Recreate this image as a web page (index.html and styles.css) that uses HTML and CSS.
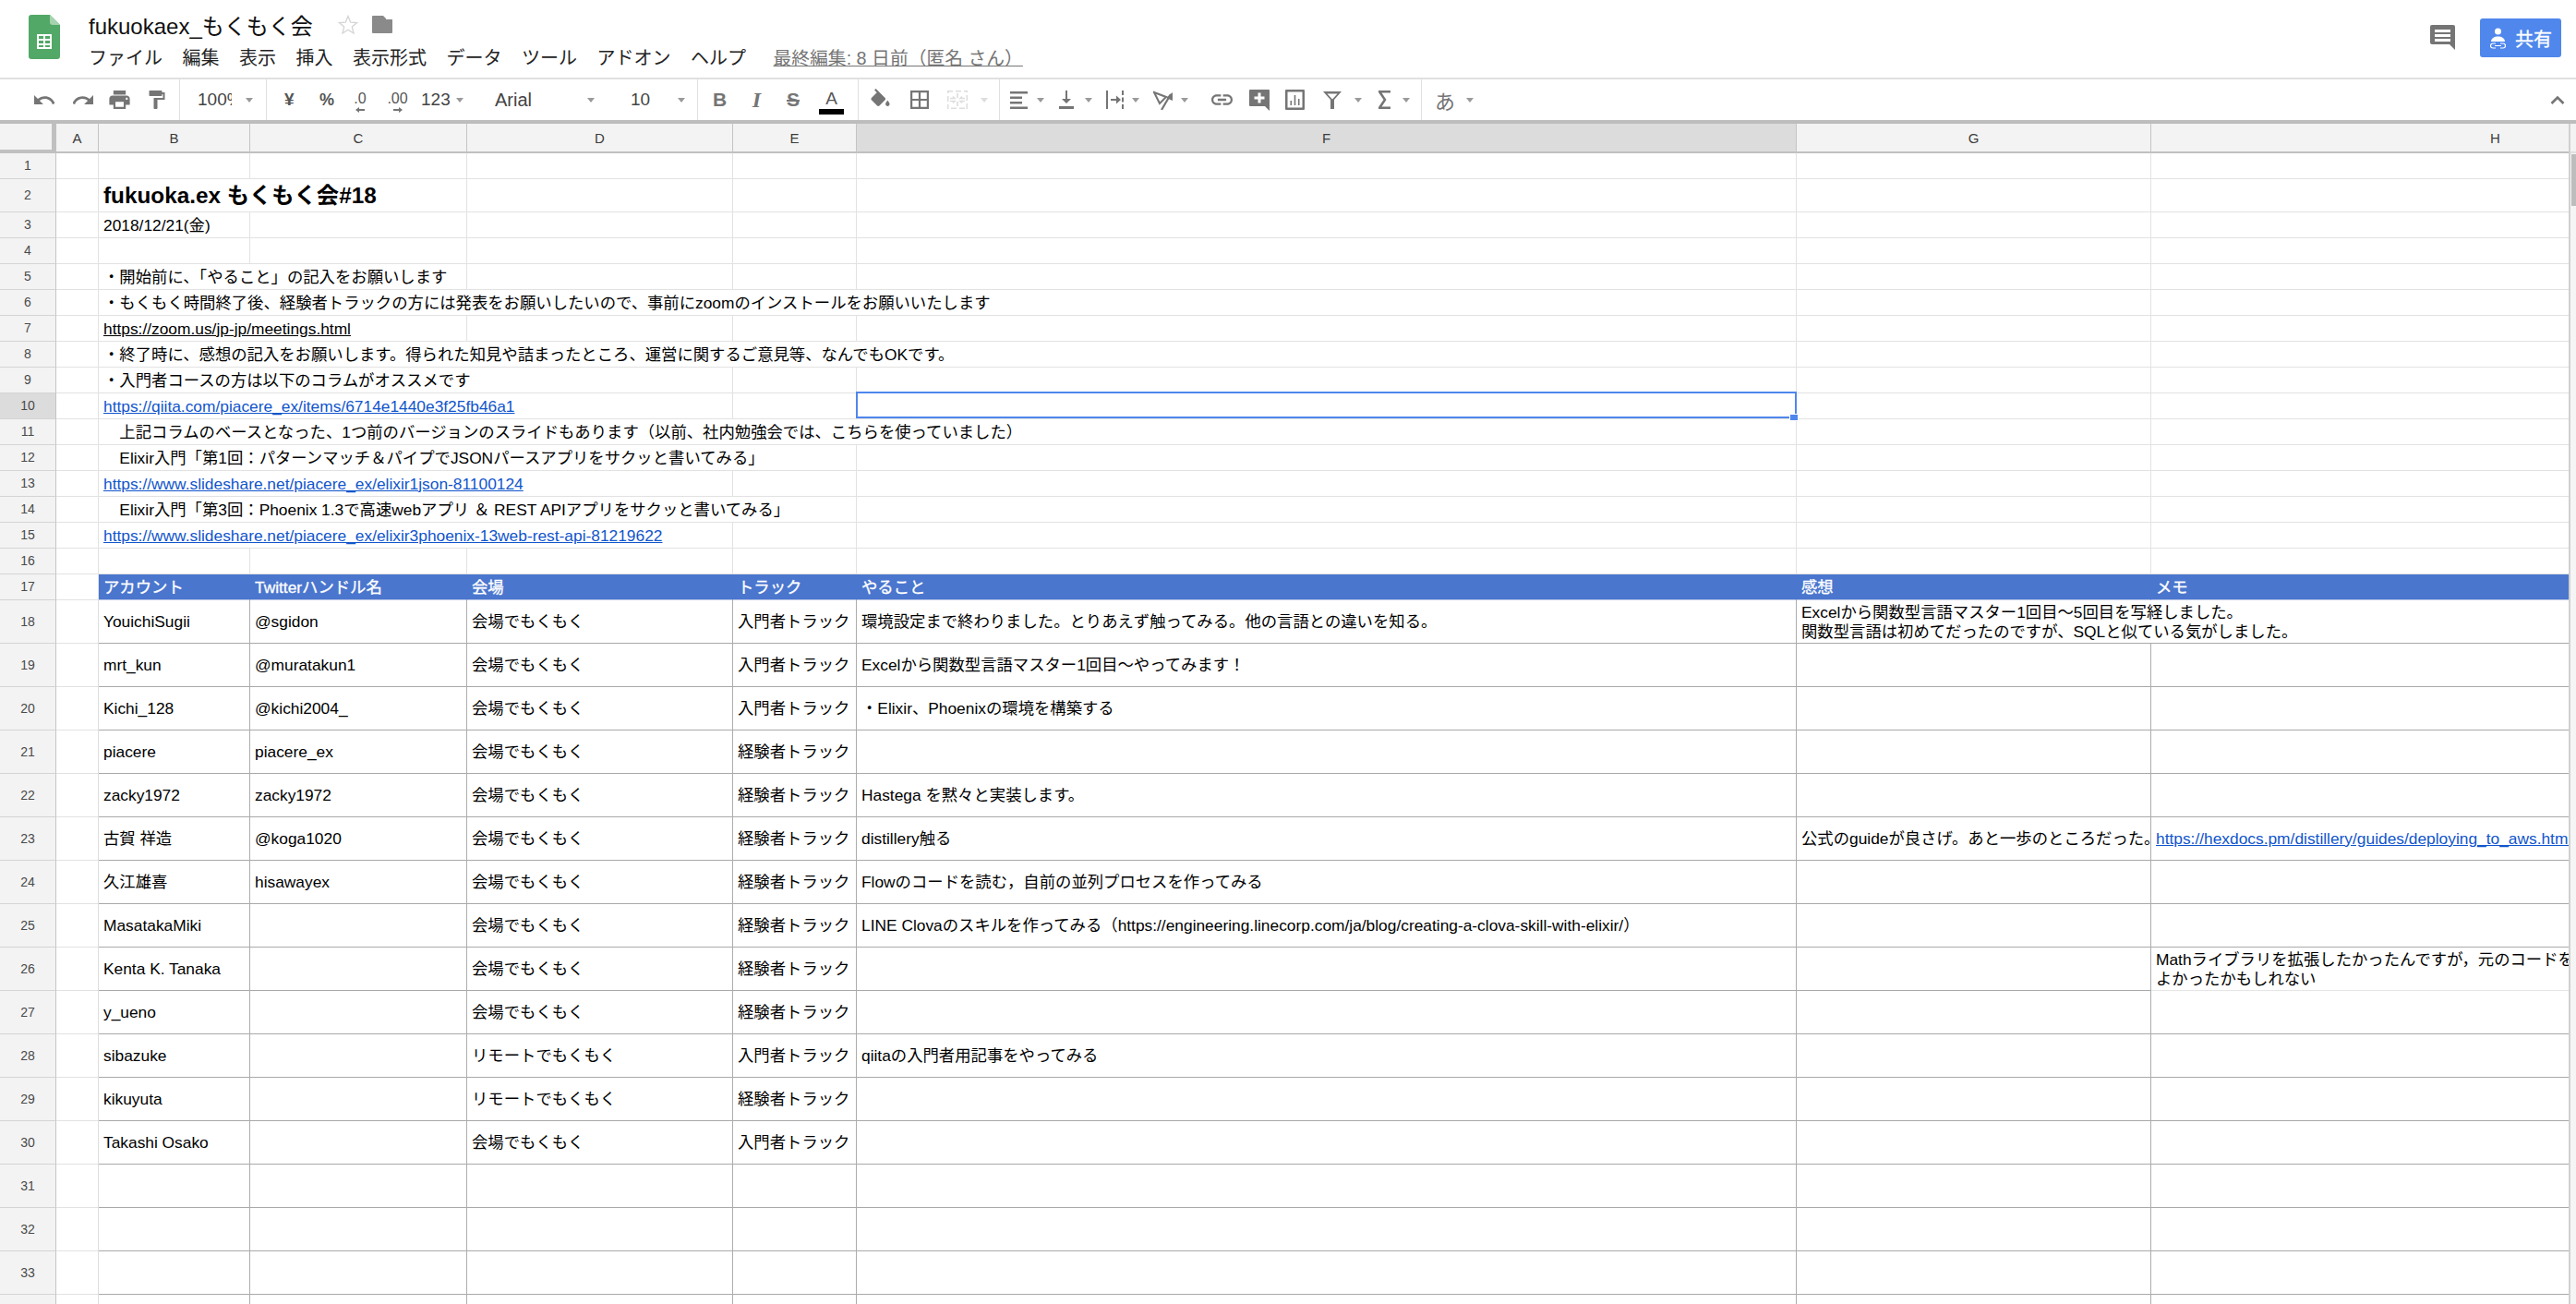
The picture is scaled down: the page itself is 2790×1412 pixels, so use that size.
FILE: index.html
```html
<!DOCTYPE html>
<html lang="ja">
<head>
	<meta charset="UTF-8">
	<title>fukuokaex_もくもく会</title>
	<link rel="stylesheet" href="styles.css">
</head>
<body>

	<div class="title_bar">
		<svg class="logo" viewBox="0 0 34 48">
			<path d="M3 0H23L34 11V45a3 3 0 0 1-3 3H3a3 3 0 0 1-3-3V3a3 3 0 0 1 3-3z" fill="#52a866"/>
			<path d="M23 0L34 11H26a3 3 0 0 1-3-3z" fill="#a5d3ae"/>
			<path d="M9 21H25V37H9zM11 23v3h5v-3zm7 0v3h5v-3zm-7 5v3h5v-3zm7 0v3h5v-3zm-7 5v2h5v-2zm7 0v2h5v-2z" fill="#fff" fill-rule="evenodd"/>
		</svg>
		<div class="doc_info">
			<div class="doc_name">
				<span class="doc_title">fukuokaex_もくもく会</span>
				<svg class="star" viewBox="0 0 22 21"><path d="M11 1.500l2.700 6.600 7 .5-5.400 4.500 1.700 6.900-6-3.800-6 3.800 1.700-6.900L1.300 8.600l7-.5z" fill="none" stroke="#d4d4d4" stroke-width="1.300"/></svg>
				<svg class="folder" viewBox="0 0 22 19"><path d="M1 0H12L15 3V4H22V18a1 1 0 0 1-1 1H1a1 1 0 0 1-1-1V1a1 1 0 0 1 1-1z" fill="#8a8a8a"/></svg>
			</div>
			<div class="menu">
				<span>ファイル</span><span>編集</span><span>表示</span><span>挿入</span><span>表示形式</span><span>データ</span><span>ツール</span><span>アドオン</span><span>ヘルプ</span>
				<span class="last_edit">最終編集: 8 日前（匿名 さん）</span>
			</div>
		</div>
		<svg class="comments" viewBox="0 0 27 27">
			<path d="M2 0H25a2 2 0 0 1 2 2V27L21 21H2a2 2 0 0 1-2-2V2a2 2 0 0 1 2-2z" fill="#757575"/>
			<path d="M5 5H22V8H5zM5 10H22V13H5zM5 15H22V18H5z" fill="#fff"/>
		</svg>
		<div class="share">
			<svg class="share_icon" viewBox="0 0 17 23">
				<circle cx="8.500" cy="4" r="3.500" fill="#fff"/>
				<path d="M1 15c0-3.500 3.500-5.500 7.500-5.500S16 11.500 16 15z" fill="#fff"/>
				<path d="M6 17H3a2.500 2.500 0 0 0 0 5H6M11 17h3a2.500 2.500 0 0 1 0 5H11M5 19.500H12" fill="none" stroke="#fff" stroke-width="1.200"/>
			</svg>
			<span>共有</span>
		</div>
	</div>

	<div class="toolbar">
		<svg class="tool undo" viewBox="2 7 20 9"><path d="M12.500 8c-2.650 0-5.050.99-6.900 2.600L2 7v9h9l-3.620-3.620c1.390-1.160 3.160-1.880 5.120-1.880 3.540 0 6.550 2.310 7.600 5.500l2.370-.78C21.080 11.030 17.150 8 12.500 8z"/></svg>
		<svg class="tool redo" viewBox="2 7 20 9"><path d="M18.400 10.600C16.550 8.990 14.150 8 11.500 8c-4.650 0-8.580 3.030-9.960 7.220L3.900 16c1.050-3.190 4.050-5.500 7.600-5.500 1.950 0 3.730.72 5.120 1.880L13 16h9V7l-3.600 3.600z"/></svg>
		<svg class="tool print" viewBox="2 3 20 18"><path d="M19 8H5c-1.660 0-3 1.340-3 3v6h4v4h12v-4h4v-6c0-1.660-1.340-3-3-3zm-3 11H8v-5h8v5zm3-7c-.55 0-1-.45-1-1s.45-1 1-1 1 .45 1 1-.45 1-1 1zm-1-9H6v4h12V3z"/></svg>
		<svg class="tool paint" viewBox="4 2 17 20"><path d="M18 4V3c0-.55-.45-1-1-1H5c-.55 0-1 .45-1 1v4c0 .55.45 1 1 1h12c.55 0 1-.45 1-1V6h1v4H9v11c0 .55.45 1 1 1h2c.55 0 1-.45 1-1v-9h8V4h-3z"/></svg>
		<i class="sep s1"></i>
		<span class="tool_text zoom">100%</span>
		<i class="caret c1"></i>
		<i class="sep s2"></i>
		<span class="tool_text yen">¥</span>
		<span class="tool_text pct">%</span>
		<span class="decimal dec_less">.0
			<svg viewBox="0 0 10 6"><path d="M0 3L4 0V2H10V4H4V6z"/></svg>
		</span>
		<span class="decimal dec_more">.00
			<svg viewBox="0 0 10 6"><path d="M10 3L6 0V2H0V4H6V6z"/></svg>
		</span>
		<span class="tool_text fmt">123</span>
		<i class="caret c2"></i>
		<span class="tool_text font_name">Arial</span>
		<i class="caret"></i>
		<span class="tool_text font_size">10</span>
		<i class="caret c3"></i>
		<i class="sep s3"></i>
		<span class="tool_text bold">B</span>
		<span class="tool_text ital">I</span>
		<span class="tool_text strike">S</span>
		<span class="text_color"><span>A</span><i></i></span>
		<i class="sep s4"></i>
		<svg class="tool fill" viewBox="3 0 18 17"><path d="M16.560 8.940L7.620 0 6.210 1.410l2.380 2.380-5.150 5.150c-.59.59-.59 1.540 0 2.120l5.500 5.500c.29.29.68.44 1.060.44s.77-.15 1.060-.44l5.500-5.500c.59-.58.59-1.530 0-2.120zM19 11.500s-2 2.170-2 3.500c0 1.100.9 2 2 2s2-.9 2-2c0-1.330-2-3.500-2-3.500z"/></svg>
		<svg class="tool borders" viewBox="3 3 18 18"><path d="M3 3v18h18V3H3zm8 16H5v-6h6v6zm0-8H5V5h6v6zm8 8h-6v-6h6v6zm0-8h-6V5h6v6z"/></svg>
		<svg class="tool merge" viewBox="0 0 22 20"><path d="M0 0H22V20H0z" fill="none" stroke="#ddd" stroke-width="3" stroke-dasharray="6 3"/><path d="M11 3V8M11 12V17M3 8.500H8L6 6.500M3 11.500H8L6 13.500M19 8.500H14L16 6.500M19 11.500H14L16 13.500" fill="none" stroke="#ddd" stroke-width="1.600"/></svg>
		<i class="caret c4 off"></i>
		<i class="sep s5"></i>
		<svg class="tool align" viewBox="0 0 19 19"><path d="M0 0H19V2.500H0zM0 5.500H13V8H0zM0 11H13V13.500H0zM0 16.500H19V19H0z"/></svg>
		<i class="caret c5"></i>
		<svg class="tool valign" viewBox="0 0 16 20"><path d="M0 17H16V20H0zM7 0H9V9H13L8 14 3 9H7z"/></svg>
		<i class="caret c6"></i>
		<svg class="tool wrap" viewBox="0 0 19 20"><path d="M0 0H2V20H0zM17 0H19V5H17zM17 7.500H19V12.500H17zM17 15H19V20H17zM5 9H11V5.500L16 10 11 14.500V11H5z"/></svg>
		<i class="caret c7"></i>
		<svg class="tool rotate" viewBox="0 0 22 21"><path d="M1 2L14 7 7 14z" fill="none" stroke="#757575" stroke-width="2"/><path d="M19 4L9 21" fill="none" stroke="#757575" stroke-width="2.200"/><path d="M14 8L21 2V11z"/></svg>
		<i class="caret c8"></i>
		<svg class="tool link" viewBox="2 7 20 10"><path d="M3.900 12c0-1.710 1.390-3.100 3.100-3.100h4V7H7c-2.760 0-5 2.240-5 5s2.240 5 5 5h4v-1.900H7c-1.710 0-3.100-1.390-3.100-3.100zM8 13h8v-2H8v2zm9-6h-4v1.900h4c1.710 0 3.100 1.390 3.100 3.100s-1.390 3.100-3.100 3.100h-4V17h4c2.760 0 5-2.240 5-5s-2.240-5-5-5z"/></svg>
		<svg class="tool note" viewBox="0 0 22 23"><path d="M1 0H21a1 1 0 0 1 1 1V23L17 18H1a1 1 0 0 1-1-1V1a1 1 0 0 1 1-1z"/><path d="M9.500 3.500H12.500V7.500H16.500V10.500H12.500V14.500H9.500V10.500H5.500V7.500H9.500z" fill="#fff"/></svg>
		<svg class="tool chart" viewBox="0 0 21 22"><path d="M1 0H20a1 1 0 0 1 1 1V21a1 1 0 0 1-1 1H1a1 1 0 0 1-1-1V1a1 1 0 0 1 1-1zM2.500 2.500V19.500H18.500V2.500zM5.500 12H7V17H5.500zM9.700 6H11.300V17H9.700zM14 10H15.500V17H14z" fill-rule="evenodd"/></svg>
		<svg class="tool filter" viewBox="0 0 20 19"><path d="M0 0H20L12 9V19H8V9zM4.500 2.500L10 8.500 15.500 2.500z" fill-rule="evenodd"/></svg>
		<i class="caret c9"></i>
		<svg class="tool sigma" viewBox="0 0 13 20"><path d="M0 0H13V2.500H3.500L8.500 10 3.500 17.500H13V20H0V18L5.500 10 0 2z"/></svg>
		<i class="caret c10"></i>
		<i class="sep s6"></i>
		<span class="tool_text ime">あ</span>
		<i class="caret c11"></i>
		<svg class="collapse" viewBox="0 0 16 10"><path d="M1.500 9L8 2.500 14.500 9" fill="none" stroke="#757575" stroke-width="2.600"/></svg>
	</div>

	<div class="sheet">
		<div class="grid_view">
			<table class="grid">
				<colgroup>
					<col class="col_rh"><col class="col_a"><col class="col_b"><col class="col_c"><col class="col_d"><col class="col_e"><col class="col_f"><col class="col_g"><col class="col_h">
				</colgroup>
				<thead>
					<tr>
						<th class="corner"></th><th>A</th><th>B</th><th>C</th><th>D</th><th>E</th><th class="active">F</th><th>G</th><th>H</th>
					</tr>
				</thead>
				<tbody>
					<tr class="short"><th>1</th><td></td><td></td><td></td><td></td><td></td><td></td><td></td><td></td></tr>
					<tr class="big"><th>2</th><td></td><td colspan="2" class="heading">fukuoka.ex もくもく会#18</td><td></td><td></td><td></td><td></td><td></td></tr>
					<tr class="short"><th>3</th><td></td><td>2018/12/21(金)</td><td></td><td></td><td></td><td></td><td></td><td></td></tr>
					<tr class="short"><th>4</th><td></td><td></td><td></td><td></td><td></td><td></td><td></td><td></td></tr>
					<tr class="short"><th>5</th><td></td><td colspan="2">・開始前に、「やること」の記入をお願いします</td><td></td><td></td><td></td><td></td><td></td></tr>
					<tr class="short"><th>6</th><td></td><td colspan="5">・もくもく時間終了後、経験者トラックの方には発表をお願いしたいので、事前にzoomのインストールをお願いいたします</td><td></td><td></td></tr>
					<tr class="short"><th>7</th><td></td><td colspan="2"><a class="plain" href="#">https://zoom.us/jp-jp/meetings.html</a></td><td></td><td></td><td></td><td></td><td></td></tr>
					<tr class="short"><th>8</th><td></td><td colspan="5">・終了時に、感想の記入をお願いします。得られた知見や詰まったところ、運営に関するご意見等、なんでもOKです。</td><td></td><td></td></tr>
					<tr class="short"><th>9</th><td></td><td colspan="3">・入門者コースの方は以下のコラムがオススメです</td><td></td><td></td><td></td><td></td></tr>
					<tr class="short"><th class="active">10</th><td></td><td colspan="3"><a href="#">https://qiita.com/piacere_ex/items/6714e1440e3f25fb46a1</a></td><td></td><td class="selected"><span class="handle"></span></td><td></td><td></td></tr>
					<tr class="short"><th>11</th><td></td><td colspan="5">　上記コラムのベースとなった、1つ前のバージョンのスライドもあります（以前、社内勉強会では、こちらを使っていました）</td><td></td><td></td></tr>
					<tr class="short"><th>12</th><td></td><td colspan="4">　Elixir入門「第1回：パターンマッチ＆パイプでJSONパースアプリをサクッと書いてみる」</td><td></td><td></td><td></td></tr>
					<tr class="short"><th>13</th><td></td><td colspan="3"><a href="#">https://www.slideshare.net/piacere_ex/elixir1json-81100124</a></td><td></td><td></td><td></td><td></td></tr>
					<tr class="short"><th>14</th><td></td><td colspan="4">　Elixir入門「第3回：Phoenix 1.3で高速webアプリ ＆ REST APIアプリをサクッと書いてみる」</td><td></td><td></td><td></td></tr>
					<tr class="short"><th>15</th><td></td><td colspan="3"><a href="#">https://www.slideshare.net/piacere_ex/elixir3phoenix-13web-rest-api-81219622</a></td><td></td><td></td><td></td><td></td></tr>
					<tr class="short"><th>16</th><td></td><td></td><td></td><td></td><td></td><td></td><td></td><td></td></tr>
					<tr class="short header_row"><th>17</th><td></td><td>アカウント</td><td>Twitterハンドル名</td><td>会場</td><td>トラック</td><td>やること</td><td>感想</td><td>メモ</td></tr>
					<tr class="data"><th>18</th><td></td><td>YouichiSugii</td><td>@sgidon</td><td>会場でもくもく</td><td>入門者トラック</td><td>環境設定まで終わりました。とりあえず触ってみる。他の言語との違いを知る。</td><td colspan="2">Excelから関数型言語マスター1回目〜5回目を写経しました。<br>関数型言語は初めてだったのですが、SQLと似ている気がしました。</td></tr>
					<tr class="data"><th>19</th><td></td><td>mrt_kun</td><td>@muratakun1</td><td>会場でもくもく</td><td>入門者トラック</td><td>Excelから関数型言語マスター1回目〜やってみます！</td><td></td><td></td></tr>
					<tr class="data"><th>20</th><td></td><td>Kichi_128</td><td>@kichi2004_</td><td>会場でもくもく</td><td>入門者トラック</td><td>・Elixir、Phoenixの環境を構築する</td><td></td><td></td></tr>
					<tr class="data"><th>21</th><td></td><td>piacere</td><td>piacere_ex</td><td>会場でもくもく</td><td>経験者トラック</td><td></td><td></td><td></td></tr>
					<tr class="data"><th>22</th><td></td><td>zacky1972</td><td>zacky1972</td><td>会場でもくもく</td><td>経験者トラック</td><td>Hastega を黙々と実装します。</td><td></td><td></td></tr>
					<tr class="data"><th>23</th><td></td><td>古賀 祥造</td><td>@koga1020</td><td>会場でもくもく</td><td>経験者トラック</td><td>distillery触る</td><td>公式のguideが良さげ。あと一歩のところだった。</td><td><a href="#">https://hexdocs.pm/distillery/guides/deploying_to_aws.html</a></td></tr>
					<tr class="data"><th>24</th><td></td><td>久江雄喜</td><td>hisawayex</td><td>会場でもくもく</td><td>経験者トラック</td><td>Flowのコードを読む，自前の並列プロセスを作ってみる</td><td></td><td></td></tr>
					<tr class="data"><th>25</th><td></td><td>MasatakaMiki</td><td></td><td>会場でもくもく</td><td>経験者トラック</td><td>LINE Clovaのスキルを作ってみる（https://engineering.linecorp.com/ja/blog/creating-a-clova-skill-with-elixir/）</td><td></td><td></td></tr>
					<tr class="data"><th>26</th><td></td><td>Kenta K. Tanaka</td><td></td><td>会場でもくもく</td><td>経験者トラック</td><td></td><td></td><td class="soft">Mathライブラリを拡張したかったんですが，元のコードを<br>よかったかもしれない</td></tr>
					<tr class="data"><th>27</th><td></td><td>y_ueno</td><td></td><td>会場でもくもく</td><td>経験者トラック</td><td></td><td></td><td></td></tr>
					<tr class="data"><th>28</th><td></td><td>sibazuke</td><td></td><td>リモートでもくもく</td><td>入門者トラック</td><td>qiitaの入門者用記事をやってみる</td><td></td><td></td></tr>
					<tr class="data"><th>29</th><td></td><td>kikuyuta</td><td></td><td>リモートでもくもく</td><td>経験者トラック</td><td></td><td></td><td></td></tr>
					<tr class="data"><th>30</th><td></td><td>Takashi Osako</td><td></td><td>会場でもくもく</td><td>入門者トラック</td><td></td><td></td><td></td></tr>
					<tr class="data"><th>31</th><td></td><td></td><td></td><td></td><td></td><td></td><td></td><td></td></tr>
					<tr class="data"><th>32</th><td></td><td></td><td></td><td></td><td></td><td></td><td></td><td></td></tr>
					<tr class="data"><th>33</th><td></td><td></td><td></td><td></td><td></td><td></td><td></td><td></td></tr>
					<tr class="data"><th></th><td></td><td></td><td></td><td></td><td></td><td></td><td></td><td></td></tr>
				</tbody>
			</table>
		</div>
		<div class="scrollbar">
			<div class="scroll_head"></div>
			<div class="thumb"></div>
		</div>
	</div>

</body>
</html>
```

FILE: styles.css
```css
html, body{
	margin: 0;
	height: 1412px;
	overflow: hidden;
	background: #fff;
}

body{
	display: flex;
	flex-direction: column;
	font-family: "Liberation Sans", "Noto Sans CJK JP", sans-serif;
	color: #000;
}

/* title bar */
.title_bar{
	display: flex;
	flex: none;
	height: 84px;
	border-bottom: 2px solid #e0e0e0;
}

.logo{
	flex: none;
	width: 34px;
	height: 48px;
	margin: 16px 0 0 31px;
}

.doc_info{
	margin-left: 31px;
}

.doc_name{
	display: flex;
	align-items: center;
	height: 32px;
	margin-top: 10px;
}

.doc_title{
	font-size: 24px;
	color: #111;
}

.star{
	width: 22px;
	height: 21px;
	margin-left: 27px;
}

.folder{
	width: 22px;
	height: 19px;
	margin-left: 15px;
}

.menu{
	display: flex;
	gap: 21.500px;
	margin-top: 5px;
	height: 32px;
	line-height: 32px;
	font-size: 20px;
	color: #222;
	white-space: nowrap;
}

.last_edit{
	margin-left: 8px;
	font-size: 19.800px;
	color: #757575;
	text-decoration: underline;
}

.comments{
	width: 27px;
	height: 27px;
	margin: 27px 0 0 auto;
}

.share{
	display: flex;
	align-items: center;
	width: 88px;
	height: 42px;
	margin: 20px 16px 0 27px;
	border-radius: 3px;
	background: #4f87ec;
	color: #fff;
	font-size: 20px;
	-webkit-text-stroke: 0.3px #fff;
}

.share_icon{
	width: 17px;
	height: 23px;
	margin: 0 10px 0 11px;
}

/* toolbar */
.toolbar{
	display: flex;
	flex: none;
	align-items: center;
	height: 44px;
	border-bottom: 4px solid #bdbdbd;
	fill: #757575;
	color: #555;
	white-space: nowrap;
}

.tool{
	flex: none;
	width: 20px;
	height: 20px;
}

.tool_text{
	flex: none;
	font-size: 19px;
}

.sep{
	flex: none;
	width: 1px;
	height: 44px;
	background: #e0e0e0;
}

.caret{
	flex: none;
	width: 0;
	height: 0;
	border: 4px solid transparent;
	border-top: 5px solid #9a9a9a;
	border-bottom: 0;
}

.caret.off{
	border-top-color: #dddddd;
}

.undo{ width: 22px; height: 10px; margin-left: 37px; }
.redo{ width: 22px; height: 10px; margin-left: 20px; }
.print{ width: 23px; height: 20px; margin-left: 17px; }
.paint{ width: 18px; height: 20px; margin-left: 20px; }
.s1{ margin-left: 15px; }
.zoom{ width: 37px; margin-left: 19px; margin-right: 2px; overflow: hidden; color: #444; }
.c1{ margin-left: 13px; }
.s2{ margin-left: 14px; }
.yen{ width: 10px; margin-left: 19px; font-weight: bold; }
.pct{ width: 14px; margin-left: 28px; font-size: 18px; font-weight: bold; }

.decimal{
	display: flex;
	flex: none;
	flex-direction: column;
	align-items: center;
	font-size: 16px;
	line-height: 17px;
	margin-top: 4px;
}

.decimal svg{
	width: 10px;
	height: 6px;
	margin-top: 1px;
}

.dec_less{ width: 22px; margin-left: 19px; }
.dec_more{ width: 25px; margin-left: 17px; }
.fmt{ width: 33px; margin-left: 13px; color: #444; }
.c2{ margin-left: 5px; }
.font_name{ width: 100px; margin-left: 34px; font-size: 20px; color: #444; }
.font_size{ width: 21px; margin-left: 39px; color: #444; }
.c3{ margin-left: 30px; }
.s3{ margin-left: 13px; }
.bold{ width: 13px; margin-left: 16px; font-weight: bold; font-size: 21px; color: #757575; }
.ital{ width: 17px; margin-left: 26px; font-family: "Liberation Serif", serif; font-style: italic; font-weight: bold; font-size: 24px; color: #757575; text-align: center; }
.strike{ width: 20px; margin-left: 21px; font-weight: bold; font-size: 21px; color: #757575; text-align: center; text-decoration: line-through; }

.text_color{
	display: flex;
	flex: none;
	flex-direction: column;
	align-items: center;
	width: 27px;
	margin-left: 18px;
	font-size: 19px;
	line-height: 22px;
	margin-top: 3px;
}

.text_color i{
	width: 27px;
	height: 6px;
	background: #000;
}

.s4{ margin-left: 15px; }
.fill{ width: 21px; height: 19px; margin: -5px 0 0 13px; }
.borders{ margin-left: 22px; }
.merge{ width: 22px; height: 20px; margin-left: 20px; }
.c4{ margin-left: 14px; }
.s5{ margin-left: 12px; }
.align{ width: 19px; height: 19px; margin-left: 11px; }
.c5{ margin-left: 10px; }
.valign{ width: 16px; height: 20px; margin-left: 16px; }
.c6{ margin-left: 12px; }
.wrap{ width: 19px; margin-left: 15px; }
.c7{ margin-left: 9px; }
.rotate{ width: 22px; height: 21px; margin-left: 15px; }
.c8{ margin-left: 8px; }
.link{ width: 23px; height: 12px; margin-left: 25px; }
.note{ width: 22px; height: 23px; margin-left: 18px; }
.chart{ width: 21px; height: 22px; margin-left: 17px; }
.filter{ width: 20px; height: 19px; margin-left: 20px; }
.c9{ margin-left: 14px; }
.sigma{ width: 13px; margin-left: 18px; }
.c10{ margin-left: 13px; }
.s6{ margin-left: 12px; }
.ime{ width: 22px; margin-left: 14px; font-size: 22px; color: #757575; }
.c11{ margin-left: 12px; }

.collapse{
	width: 16px;
	height: 10px;
	margin: 0 12px 0 auto;
}

/* sheet */
.sheet{
	display: flex;
	flex: none;
}

.grid_view{
	flex: none;
	box-sizing: border-box;
	width: 2784px;
	height: 1278px;
	border-right: 2px solid #d0d0d0;
	overflow: hidden;
}

.grid{
	width: 3076px;
	table-layout: fixed;
	border-collapse: separate;
	border-spacing: 0;
	font-size: 17.350px;
	line-height: 21px;
}

.col_rh{ width: 61px; }
.col_a{ width: 46px; }
.col_b{ width: 164px; }
.col_c{ width: 235px; }
.col_d{ width: 288px; }
.col_e{ width: 134px; }
.col_f{ width: 1018px; }
.col_g{ width: 384px; }
.col_h{ width: 746px; }

.grid th, .grid td{
	box-sizing: border-box;
	padding: 0;
	white-space: nowrap;
	overflow: hidden;
}

.grid td{
	padding: 1px 0 0 5px;
	border-right: 1px solid #e2e2e2;
	border-bottom: 1px solid #e2e2e2;
}

.grid th{
	background: #f3f3f3;
	border-right: 1px solid #c4c4c4;
	border-bottom: 1px solid #d4d4d4;
	font-weight: normal;
	font-size: 14px;
	color: #4a4a4a;
}

.grid thead th{
	height: 32px;
	font-size: 15px;
	color: #3c3c3c;
	border-bottom: 2px solid #c0c0c0;
}

.grid th.corner{
	border-right: 5px solid #c0c0c0;
	border-bottom: 4px solid #c0c0c0;
}

.grid th.active{
	background: #dcdcdc;
}

.short{ height: 28px; }
.big{ height: 36px; }
.data{ height: 47px; }

.grid td.heading{
	font-size: 24.300px;
	font-weight: bold;
	line-height: 30px;
}

.grid a{
	color: #1155cc;
}

.grid a.plain{
	color: #000;
}

.header_row td{
	background: #4a76ce;
	color: #fff;
	border-right-color: #4a76ce;
	border-bottom-color: #b9c7e4;
	-webkit-text-stroke: 0.3px #fff;
}

.header_row td:nth-child(2){
	background: #fff;
	border-right-color: #e2e2e2;
	border-bottom-color: #e2e2e2;
}

.data td{
	border-right-color: #adadad;
	border-bottom-color: #a9a9a9;
}

.data td:nth-child(2){
	border-right-color: #dddddd;
	border-bottom-color: #e2e2e2;
}

.data td.soft{
	border-bottom-color: #e6e6e6;
}

.grid td.selected{
	position: relative;
	overflow: visible;
}

.selected::after{
	content: "";
	position: absolute;
	top: -2px;
	left: -1px;
	right: -1px;
	bottom: 0;
	border: 2px solid #4f87ec;
}

.handle{
	position: absolute;
	z-index: 1;
	right: -3px;
	bottom: -3px;
	width: 8px;
	height: 6px;
	border: 1px solid #fff;
	background: #4f87ec;
}

.scrollbar{
	flex: none;
	width: 6px;
	height: 1278px;
	background: #f5f5f5;
}

.scroll_head{
	height: 30px;
	border-bottom: 2px solid #e0e0e0;
	background: #f3f3f3;
}

.thumb{
	width: 5px;
	height: 56px;
	margin: 1px 0 0 1px;
	background: #bdbdbd;
}
```
